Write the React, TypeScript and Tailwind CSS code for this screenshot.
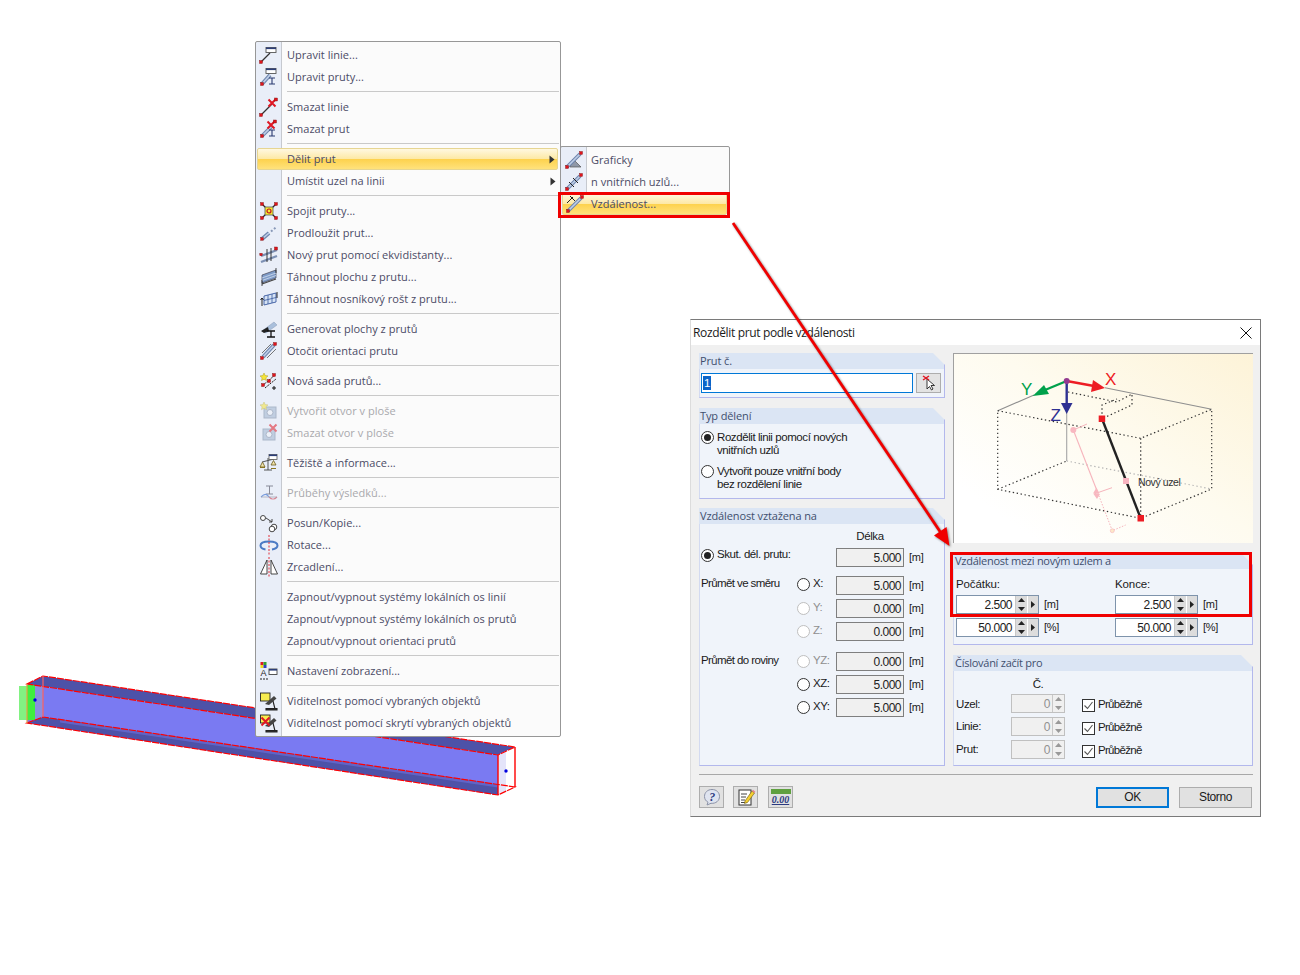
import React from "react";

const Node = ({ x, y, s = 3 }: { x: number; y: number; s?: number }) => (
  <rect x={x - s / 2} y={y - s / 2} width={s} height={s} fill="#e0141c" stroke="#7a1010" strokeWidth="0.4" />
);
const Win = ({ x = 7, y = 2.5 }: { x?: number; y?: number }) => (
  <g>
    <rect x={x} y={y} width="10" height="5" fill="#fff" stroke="#555" strokeWidth="0.9" />
    <rect x={x} y={y} width="10" height="1.6" fill="#2c3e78" />
  </g>
);
const Bar = ({ x1, y1, x2, y2 }: { x1: number; y1: number; x2: number; y2: number }) => (
  <g>
    <line x1={x1} y1={y1} x2={x2} y2={y2} stroke="#6f86ad" strokeWidth="3.8" />
    <line x1={x1} y1={y1} x2={x2} y2={y2} stroke="#bfcfe8" strokeWidth="1.6" />
  </g>
);
const IGlyph = ({ x, y, c = "#2a3a70" }: { x: number; y: number; c?: string }) => (
  <path d={`M${x - 3} ${y}h6M${x} ${y}v6M${x - 3} ${y + 6}h6`} stroke={c} strokeWidth="1.1" fill="none" />
);
const RedX = ({ x, y, s = 3.5 }: { x: number; y: number; s?: number }) => (
  <path d={`M${x - s} ${y - s}L${x + s} ${y + s}M${x + s} ${y - s}L${x - s} ${y + s}`} stroke="#e01824" strokeWidth="2" />
);
const Star = ({ x, y }: { x: number; y: number }) => (
  <path
    d={`M${x} ${y - 4}l1.2 2.6 2.8.3-2.1 1.9.6 2.8-2.5-1.4-2.5 1.4.6-2.8-2.1-1.9 2.8-.3z`}
    fill="#f6e43a"
    stroke="#a89a20"
    strokeWidth="0.5"
  />
);
const Ic = ({ children }: { children: React.ReactNode }) => (
  <svg width="20" height="20" viewBox="0 0 20 20" fill="none">
    {children}
  </svg>
);

const icons: Record<string, React.ReactNode> = {
  editLine: (
    <Ic>
      <line x1="2" y1="17" x2="11" y2="8" stroke="#333" strokeWidth="1.2" />
      <Win />
      <Node x={2} y={17} />
    </Ic>
  ),
  editBar: (
    <Ic>
      <Bar x1={3} y1={17} x2={11} y2={8} />
      <Win x={7} y={1.5} />
      <IGlyph x={13} y={11} />
      <Node x={3} y={17} />
    </Ic>
  ),
  delLine: (
    <Ic>
      <line x1="2" y1="18" x2="13" y2="7" stroke="#333" strokeWidth="1.2" />
      <RedX x={13} y={6} />
      <Node x={2} y={18} />
      <Node x={17} y={2.5} />
    </Ic>
  ),
  delBar: (
    <Ic>
      <Bar x1={3} y1={17} x2={13} y2={7} />
      <IGlyph x={13} y={11} />
      <RedX x={12} y={6} />
      <Node x={3} y={17} />
      <Node x={16} y={2.5} />
    </Ic>
  ),
  join: (
    <Ic>
      <path d="M3 3L17 17M17 3L3 17" stroke="#222" strokeWidth="1.2" />
      <rect x="6" y="6" width="8" height="8" fill="#f6ea30" stroke="#555" strokeWidth="0.8" />
      <circle cx="10" cy="10" r="2" fill="none" stroke="#c01020" strokeWidth="1.2" />
      <Node x={3} y={3} />
      <Node x={17} y={3} />
      <Node x={3} y={17} />
      <Node x={17} y={17} />
    </Ic>
  ),
  extend: (
    <Ic>
      <Bar x1={3} y1={16} x2={10} y2={10} />
      <path d="M12 8.5l1.5-1.3M15 6l1.5-1.3" stroke="#8899b8" strokeWidth="2" />
      <Node x={3} y={16} s={2.6} />
    </Ic>
  ),
  equi: (
    <Ic>
      <path d="M2 11L18 5M2 17L18 11" stroke="#7c90b4" strokeWidth="2.4" />
      <path d="M8 4v7M12 3v7M8 11v6M12 10v6" stroke="#222" strokeWidth="0.9" />
      <Node x={17} y={3.5} />
      <Node x={2} y={9.5} s={2.4} />
    </Ic>
  ),
  surf: (
    <Ic>
      <path d="M3 8L17 3V11L3 16Z" fill="#7f9cc8" stroke="#445" strokeWidth="0.7" />
      <path d="M3 11L17 6M3 13.5L17 8.5" stroke="#d0ddf0" strokeWidth="0.8" />
      <path d="M3 17L17 12" stroke="#444" strokeWidth="1.2" />
      <path d="M17 1v5M3 13v6" stroke="#222" strokeWidth="0.8" />
    </Ic>
  ),
  grid: (
    <Ic>
      <path d="M5 7L17 4V13L5 16Z" fill="#d6e3f5" stroke="#3a5aa0" strokeWidth="0.9" />
      <path d="M9 6V15M13 5V14M5 11.5L17 8.5" stroke="#3a5aa0" strokeWidth="0.8" />
      <path d="M3 9v8M1.5 11L3 9l1.5 2" stroke="#111" strokeWidth="0.9" />
      <path d="M18 3V9" stroke="#111" strokeWidth="0.9" />
    </Ic>
  ),
  gen: (
    <Ic>
      <path d="M3 12L15 3L18 6L7 14Z" fill="#a9bfdc" stroke="#8a9cb8" strokeWidth="0.5" />
      <path d="M2 12L9 8L10 12L5 14Z" fill="#222" />
      <path d="M8 12h8M12 12v6M8 18h8" stroke="#111" strokeWidth="1.3" />
    </Ic>
  ),
  rotate: (
    <Ic>
      <Bar x1={4} y1={16} x2={15} y2={4} />
      <path d="M3 12L12 3M8 17L17 8" stroke="#555" strokeWidth="0.8" />
      <Node x={3} y={17} />
      <Node x={16} y={3} />
    </Ic>
  ),
  newset: (
    <Ic>
      <path d="M3 15L16 4" stroke="#222" strokeWidth="1" strokeDasharray="2 1" />
      <path d="M6 17L17 8" stroke="#222" strokeWidth="1" strokeDasharray="2 1" />
      <Star x={5} y={6} />
      <Node x={4} y={14} />
      <Node x={15} y={4} />
      <Node x={10} y={10} />
      <path d="M15 15v4M13 17h4" stroke="#111" strokeWidth="1" />
    </Ic>
  ),
  openNew: (
    <Ic>
      <g opacity="0.55">
        <rect x="5" y="6" width="12" height="11" fill="#9fb4cf" stroke="#7b8ba3" />
        <circle cx="11" cy="11.5" r="3" fill="#eef2f8" stroke="#7b8ba3" />
        <Star x={5} y={5} />
      </g>
    </Ic>
  ),
  openDel: (
    <Ic>
      <g opacity="0.55">
        <rect x="4" y="6" width="12" height="11" fill="#9fb4cf" stroke="#7b8ba3" />
        <circle cx="10" cy="11.5" r="3" fill="#eef2f8" stroke="#7b8ba3" />
        <RedX x={14} y={5} />
      </g>
    </Ic>
  ),
  scales: (
    <Ic>
      <path d="M9 5V17M5 17H13M3 9L15 6" stroke="#444" strokeWidth="0.9" />
      <path d="M1 14L3.5 9L6 14Z" fill="#f1e3a8" stroke="#6b5a20" strokeWidth="0.8" />
      <path d="M12 12L14.5 7.5L17 12Z" fill="#f1e3a8" stroke="#6b5a20" strokeWidth="0.8" />
      <rect x="1" y="14" width="5" height="1" fill="#8a7420" />
      <rect x="12" y="15" width="5" height="1" fill="#8a7420" />
      <rect x="10" y="1.5" width="8" height="5" fill="#fff" stroke="#555" strokeWidth="0.8" />
      <rect x="10" y="1.5" width="8" height="1.6" fill="#2c3e78" />
    </Ic>
  ),
  result: (
    <Ic>
      <g opacity="0.65">
        <path d="M7 3h7M10.5 3v8M7 11h7" stroke="#556" strokeWidth="1" />
        <path d="M2 14C6 10 8 11 10 14" stroke="#3b6fd0" strokeWidth="1.1" />
        <path d="M10 14C13 17 15 17 18 14" stroke="#d04a5a" strokeWidth="1.1" />
        <path d="M2 14H18" stroke="#778" strokeWidth="0.7" />
      </g>
    </Ic>
  ),
  move: (
    <Ic>
      <circle cx="4" cy="5" r="2.5" stroke="#333" strokeWidth="0.9" fill="#fff" />
      <circle cx="15" cy="14" r="2.8" stroke="#333" strokeWidth="0.9" fill="#fff" />
      <circle cx="13" cy="16" r="2.8" stroke="#333" strokeWidth="0.9" fill="#fff" />
      <path d="M7 5L13 9M13 6V9H10" stroke="#333" strokeWidth="0.9" />
    </Ic>
  ),
  rot: (
    <Ic>
      <path d="M6.5 14.5C3 14 1.5 12.5 1.5 10.5C1.5 8 5 6.5 10 6.5C15 6.5 18.5 8 18.5 10.5C18.5 12.5 16 14 13 14.5" stroke="#4a7ac4" strokeWidth="2" />
      <path d="M10 0V20" stroke="#e01824" strokeWidth="0.9" strokeDasharray="2 1.5" />
    </Ic>
  ),
  mirror: (
    <Ic>
      <path d="M1.5 17L8 3V17ZM18.5 17L12 3V17Z" stroke="#333" strokeWidth="0.9" fill="#fff" />
      <path d="M10 0V20" stroke="#e01824" strokeWidth="0.9" strokeDasharray="2 1.5" />
    </Ic>
  ),
  display: (
    <Ic>
      <rect x="1.5" y="1" width="3" height="3" fill="#e01824" />
      <rect x="4.5" y="1" width="3" height="3" fill="#30a030" />
      <rect x="1.5" y="4" width="3" height="3" fill="#f0dc20" />
      <rect x="4.5" y="4" width="3" height="3" fill="#3040c0" />
      <text x="1.5" y="15" fontSize="9" fill="#222" fontFamily="Liberation Sans, sans-serif">A</text>
      <path d="M1 18h2M4 18h2M7 18h2" stroke="#222" strokeWidth="1.2" />
      <rect x="10" y="8" width="8" height="5.5" fill="#fff" stroke="#444" strokeWidth="0.9" />
      <rect x="10" y="8" width="8" height="1.6" fill="#2c3e78" />
    </Ic>
  ),
  vis: (
    <Ic>
      <rect x="1.5" y="2" width="9.5" height="8" fill="#f6ec50" stroke="#222" strokeWidth="0.9" />
      <path d="M6 13L15 5L17.5 7.5L10 14Z" fill="#444" />
      <path d="M7 17.5h11v1.5h-11zM14 10l2 8" stroke="#222" strokeWidth="1.1" fill="#333" />
    </Ic>
  ),
  visX: (
    <Ic>
      <rect x="1.5" y="2" width="9.5" height="8" fill="#f6ec50" stroke="#222" strokeWidth="0.9" />
      <path d="M6 13L15 5L17.5 7.5L10 14Z" fill="#444" />
      <path d="M7 17.5h11v1.5h-11zM14 10l2 8" stroke="#222" strokeWidth="1.1" fill="#333" />
      <RedX x={6.5} y={8.5} s={4} />
    </Ic>
  ),
  subGraph: (
    <Ic>
      <path d="M9 9L17 17H6Z" fill="#8f98a8" stroke="#555" strokeWidth="0.7" />
      <Bar x1={3} y1={17} x2={16} y2={4} />
      <Node x={3} y={17} />
      <Node x={17} y={3} />
    </Ic>
  ),
  subN: (
    <Ic>
      <Bar x1={3} y1={17} x2={16} y2={4} />
      <path d="M5 10L10 15M9 6L14 11" stroke="#222" strokeWidth="1" />
      <Node x={3} y={17} />
      <Node x={17} y={3} />
    </Ic>
  ),
  subDist: (
    <Ic>
      <Bar x1={3} y1={17} x2={16} y2={4} />
      <path d="M2 9L8 3M5 2L10 7" stroke="#222" strokeWidth="1" />
      <Node x={3} y={17} />
      <Node x={17} y={3} />
    </Ic>
  ),
};

type Item = { t: string; i?: string; off?: boolean; sub?: boolean; hi?: boolean } | "sep";
const items: Item[] = [
  { t: "Upravit linie...", i: "editLine" },
  { t: "Upravit pruty...", i: "editBar" },
  "sep",
  { t: "Smazat linie", i: "delLine" },
  { t: "Smazat prut", i: "delBar" },
  "sep",
  { t: "Dělit prut", sub: true, hi: true },
  { t: "Umístit uzel na linii", sub: true },
  "sep",
  { t: "Spojit pruty...", i: "join" },
  { t: "Prodloužit prut...", i: "extend" },
  { t: "Nový prut pomocí ekvidistanty...", i: "equi" },
  { t: "Táhnout plochu z prutu...", i: "surf" },
  { t: "Táhnout nosníkový rošt z prutu...", i: "grid" },
  "sep",
  { t: "Generovat plochy z prutů", i: "gen" },
  { t: "Otočit orientaci prutu", i: "rotate" },
  "sep",
  { t: "Nová sada prutů...", i: "newset" },
  "sep",
  { t: "Vytvořit otvor v ploše", i: "openNew", off: true },
  { t: "Smazat otvor v ploše", i: "openDel", off: true },
  "sep",
  { t: "Těžiště a informace...", i: "scales" },
  "sep",
  { t: "Průběhy výsledků...", i: "result", off: true },
  "sep",
  { t: "Posun/Kopie...", i: "move" },
  { t: "Rotace...", i: "rot" },
  { t: "Zrcadlení...", i: "mirror" },
  "sep",
  { t: "Zapnout/vypnout systémy lokálních os linií" },
  { t: "Zapnout/vypnout systémy lokálních os prutů" },
  { t: "Zapnout/vypnout orientaci prutů" },
  "sep",
  { t: "Nastavení zobrazení...", i: "display" },
  "sep",
  { t: "Viditelnost pomocí vybraných objektů", i: "vis" },
  { t: "Viditelnost pomocí skrytí vybraných objektů", i: "visX" },
];

const hiBg =
  "border border-[#e6d592] rounded-[2px] bg-[linear-gradient(to_bottom,#fff8e0_0%,#fde9a6_48%,#fdd24e_52%,#ffe27c_100%)]";
const menuFont = "font-['Open_Sans',sans-serif] text-[11px] tracking-[0.03px]";
const stripBg =
  "bg-[linear-gradient(to_right,#e9eef8_25px,#c6c9cf_25px,#c6c9cf_26px,#fbfbfb_26px)]";

const Tri = () => (
  <svg width="6" height="9" viewBox="0 0 6 9" className="ml-auto mr-[2px]">
    <path d="M0.5 0.5L5.5 4.5L0.5 8.5Z" fill="#333" />
  </svg>
);

function MenuRow({ it }: { it: Exclude<Item, "sep"> }) {
  return (
    <div className={`ml-px mr-[2px] flex h-[22px] items-center ${it.hi ? hiBg : ""}`}>
      <span className={`flex shrink-0 items-center justify-center ${it.hi ? "w-[23px]" : "w-[24px]"}`}>
        {it.i ? icons[it.i] : null}
      </span>
      <span className={`ml-[6px] whitespace-nowrap ${it.off ? "text-[#a9a9ad]" : "text-[#4b4b66]"}`}>{it.t}</span>
      {it.sub ? <Tri /> : null}
    </div>
  );
}

function ContextMenu() {
  return (
    <div className={`absolute left-[255px] top-[41px] w-[306px] rounded-[2px] border border-[#979797] py-[2px] ${stripBg} ${menuFont}`}>
      {items.map((it, k) =>
        it === "sep" ? (
          <div key={k} className="h-2 pl-[31px] pr-px pt-[3px]">
            <div className="h-px w-full bg-[#c9c9c9]" />
          </div>
        ) : (
          <MenuRow key={k} it={it} />
        ),
      )}
    </div>
  );
}

function SubMenu() {
  const rows = [
    { t: "Graficky", i: "subGraph" },
    { t: "n vnitřních uzlů...", i: "subN" },
    { t: "Vzdálenost...", i: "subDist", hi: true },
  ];
  return (
    <div className={`absolute left-[560px] top-[146px] w-[170px] rounded-[2px] border border-[#979797] py-[2px] ${stripBg} ${menuFont}`}>
      {rows.map((r) => (
        <div key={r.t} className={`ml-px mr-[2px] flex h-[22px] items-center ${r.hi ? hiBg : ""}`}>
          <span className={`flex shrink-0 items-center justify-center ${r.hi ? "w-[23px]" : "w-[24px]"}`}>{icons[r.i]}</span>
          <span className="ml-[5px] whitespace-nowrap text-[#4b4b66]">{r.t}</span>
        </div>
      ))}
    </div>
  );
}

function Beam() {
  return (
    <svg className="absolute left-[15px] top-[670px]" width="505" height="130" viewBox="15 670 505 130">
      <rect x="19" y="686" width="8" height="34" fill="#82f282" />
      <polygon points="27,684 498,755 498,795 27,723" fill="#7a7af2" />
      <rect x="27" y="685" width="8" height="35" fill="#3fee3f" />
      <polygon points="35,684 43,680 43,717 35,720" fill="#8a8ee0" />
      <polygon points="27,684 43,676 515,747 498,755" fill="#4d52a8" />
      <polygon points="27,723 43,717 515,787 498,795" fill="#4d52a8" />
      <polygon points="60,719.5 498,784.5 498,787.5 60,722.5" fill="#6064c8" />
      <polygon points="498,755 515,747 515,787 498,795" fill="#ffffff" />
      <polygon points="498,755 506,751 506,791 498,795" fill="#e4e4fa" />
      <g stroke="#ff0000" fill="none" strokeWidth="1.2">
        <path d="M27 684L43 676L515 747L498 755Z" strokeDasharray="7 1" />
        <path d="M27 723L43 717L515 787L498 795Z" strokeDasharray="7 1" />
        <path d="M498 755V795M515 747V787" strokeWidth="1.4" />
        <path d="M43 676V717" stroke="#ff6060" />
      </g>
      <line x1="27" y1="684" x2="27" y2="723" stroke="#e8a040" strokeWidth="1.2" />
      <circle cx="35" cy="700" r="1.7" fill="#0000e0" />
      <circle cx="506" cy="771" r="1.7" fill="#0000e0" />
    </svg>
  );
}

function Group({ title, className, right, children }: { title: string; className?: string; right?: boolean; children: React.ReactNode }) {
  return (
    <div className={`flex flex-col ${className ?? ""}`}>
      <div
        className={`flex h-4 shrink-0 items-center border-r border-r-[#b3b8ec] bg-[#dbe5f4] font-['Open_Sans',sans-serif] text-[11px] text-[#3f4f6e] [clip-path:polygon(0_0,calc(100%-12px)_0,100%_12px,100%_100%,0_100%)] ${
          right ? "pl-[2px] tracking-[-0.26px]" : "pl-px tracking-[-0.12px]"
        }`}
      >
        {title}
      </div>
      <div className="relative flex-1 border border-t-0 border-[#d3daf0] border-r-[#b3b8ec] border-b-[#b3b8ec] bg-[#f0f4fa]">{children}</div>
    </div>
  );
}

const Radio = ({ on, off }: { on?: boolean; off?: boolean }) => (
  <span
    className={`flex h-[13px] w-[13px] shrink-0 items-center justify-center rounded-full border bg-white ${
      off ? "border-[#bfbfbf]" : "border-[#333]"
    }`}
  >
    {on ? <span className="h-[7px] w-[7px] rounded-full bg-[#222]" /> : null}
  </span>
);

const Val = ({ v }: { v: string }) => (
  <span className="flex h-[19px] w-[68px] shrink-0 items-center justify-end border border-[#7f7f7f] bg-[#f0f0f0] pr-[2px] text-[12px] tracking-[-0.5px] text-[#222]">
    {v}
  </span>
);

function DistRow({
  label,
  mt,
  radio,
  off,
  v,
  wide,
  up = "mb-[1px]",
}: {
  label?: string;
  mt: string;
  radio?: string;
  off?: boolean;
  v: string;
  wide?: boolean;
  up?: string;
}) {
  return (
    <div className={`flex h-[19px] items-center ${mt}`}>
      {wide ? (
        <>
          <span className={`ml-[1px] ${up}`}><Radio on /></span>
          <span className={`ml-[3px] w-[119px] whitespace-nowrap ${up}`}>{label}</span>
        </>
      ) : (
        <>
          <span className={`ml-px w-[96px] whitespace-nowrap tracking-[-0.6px] ${up}`}>{label}</span>
          <span className={up}><Radio off={off} /></span>
          <span className={`ml-[3px] w-[23px] whitespace-nowrap ${up} ${off ? "text-[#8f8f8f]" : ""}`}>{radio}</span>
        </>
      )}
      <Val v={v} />
      <span className="ml-[5px] text-[11px] tracking-[-0.25px]">[m]</span>
    </div>
  );
}

const Updown = ({ dim }: { dim?: boolean }) => (
  <span className={`flex h-full w-[12px] shrink-0 flex-col items-center justify-around border-l border-[#c8c8c8] ${dim ? "bg-[#f0f0f0]" : "bg-[#dcdcdc]"}`}>
    <svg width="7" height="4" viewBox="0 0 7 4"><path d="M3.5 0L7 4H0Z" fill={dim ? "#999" : "#222"} /></svg>
    <svg width="7" height="4" viewBox="0 0 7 4"><path d="M0 0H7L3.5 4Z" fill={dim ? "#999" : "#222"} /></svg>
  </span>
);

function Spin({ v, unit }: { v: string; unit: string }) {
  return (
    <div className="flex h-[19px] items-center">
      <span className="flex h-[19px] w-[83px] items-center border border-[#7e93ab] bg-white">
        <span className="flex-1 pr-[3px] text-right text-[12px] tracking-[-0.5px]">{v}</span>
        <Updown />
        <span className="ml-px flex h-full w-[10px] shrink-0 items-center justify-center bg-[#dcdcdc]">
          <svg width="4" height="7" viewBox="0 0 4 7"><path d="M0 0L4 3.5L0 7Z" fill="#222" /></svg>
        </span>
      </span>
      <span className="ml-[5px] text-[11px] tracking-[-0.25px]">{unit}</span>
    </div>
  );
}

function NumRow({ label, mt, first }: { label: string; mt: string; first?: boolean }) {
  return (
    <div className={`flex h-[19px] items-center ${mt}`}>
      <span className={`ml-[2px] w-[55px] ${first ? "mt-[2px]" : ""}`}>{label}</span>
      <span className="flex h-[19px] w-[54px] items-center border border-[#c0c0c0] bg-[#f0f0f0]">
        <span className="flex-1 pr-[2px] text-right text-[12px] text-[#909090]">0</span>
        <Updown dim />
      </span>
      <span className="ml-[17px] mt-[3px] flex h-[13px] w-[13px] items-center justify-center border border-[#333] bg-white">
        <svg width="11" height="11" viewBox="0 0 11 11"><path d="M1.5 5.5L4.5 8.5L9.5 2" stroke="#555" strokeWidth="1.1" fill="none" /></svg>
      </span>
      <span className="ml-[3px] mt-[3px] tracking-[-0.7px]">Průběžně</span>
    </div>
  );
}

function Illustration() {
  return (
    <div className="h-[190px] border-l border-t border-[#a0a0a0] bg-[linear-gradient(35deg,#ffffff_15%,#fefbef_55%,#fdf3d8_100%)]">
      <svg width="299" height="189" viewBox="954 354 299 189">
        <g stroke="#8f8f8f" strokeWidth="1.1">
          <path d="M997.7 410.7L1034 395M1105 387.7L1211.7 409.3" />
          <path d="M1066.7 412V461" stroke="#a5a5a5" />
        </g>
        <g stroke="#333" strokeWidth="1.2" strokeDasharray="1.4 2.6" fill="none">
          <path d="M997.7 410.7L1140.7 438.3L1211.7 409.3V489L1140.7 518.3L997.7 489.3Z" />
          <path d="M1140.7 438.3V518.3M997.7 489.3L1066.7 461" />
          <path d="M1068 392L1117 402L1132 394V405L1102 418.7V405L1117 399" />
        </g>
        <path d="M1066.7 461L1211.7 489" stroke="#b5b5b5" strokeDasharray="1.4 2.6" strokeWidth="1.2" />
        <path d="M1073.3 430L1096.7 490" stroke="#f6b4bc" strokeWidth="1.1" />
        <path d="M1096.7 490L1112.3 530.7L1125.7 525" stroke="#f6b4bc" strokeWidth="1" strokeDasharray="1.5 1.5" fill="none" />
        <path d="M1073.3 430L1087 424M1094 494L1112 487.7" stroke="#f6b4bc" strokeWidth="1" />
        <circle cx="1073.3" cy="430" r="3" fill="#f8b8c0" />
        <path d="M1096.5 487.5l-3.5 6h6.5zM1097 499l-3.5-5h6.5z" fill="#f8b8c0" />
        <circle cx="1112.3" cy="530.7" r="2" fill="#fde8c8" stroke="#f6b4bc" strokeWidth="0.6" />
        <path d="M1102 418.7L1140.7 518.3" stroke="#222" strokeWidth="2.4" />
        <rect x="1098.7" y="415.5" width="6.5" height="6.5" fill="#ed1c24" />
        <rect x="1137.5" y="515" width="6.5" height="6.5" fill="#ed1c24" />
        <rect x="1123" y="478" width="6" height="6" fill="#f8b4c0" />
        <path d="M1066.7 381L1094 386" stroke="#ed1c24" strokeWidth="2.4" />
        <path d="M1105 388L1091 392L1093 380Z" fill="#ed1c24" />
        <path d="M1066.7 381L1045 390" stroke="#00a14b" strokeWidth="2.4" />
        <path d="M1032.7 396L1044 385L1049 394Z" fill="#00a14b" />
        <path d="M1066.7 381V404" stroke="#2e3192" strokeWidth="2.4" />
        <path d="M1066.7 414L1061 403H1072.5Z" fill="#2e3192" />
        <circle cx="1066.7" cy="381" r="3" fill="#93398f" />
        <g fontFamily="Liberation Sans, sans-serif" fontSize="17">
          <text x="1105" y="385" fill="#ed1c24">X</text>
          <text x="1021" y="395" fill="#00a14b">Y</text>
          <text x="1050.5" y="421" fill="#2e3192">Z</text>
        </g>
        <text x="1138" y="486" fontFamily="Liberation Sans, sans-serif" fontSize="10.5" fill="#333">Nový uzel</text>
      </svg>
    </div>
  );
}

function Dialog() {
  return (
    <div className="absolute left-[690px] top-[319px] h-[498px] w-[571px] border border-[#7a7a7a] border-l-[#dcdcdc] bg-[#f0f0f0] font-['Liberation_Sans',sans-serif] text-[11.5px] tracking-[-0.42px] text-[#1a1a1a]">
      <div className="flex h-[25px] items-center justify-between bg-white pl-[2px] pr-[8px] font-['Open_Sans',sans-serif] text-[12px] tracking-[-0.35px]">
        <span>Rozdělit prut podle vzdálenosti</span>
        <svg width="12" height="12" viewBox="0 0 12 12"><path d="M0.5 0.5L11.5 11.5M11.5 0.5L0.5 11.5" stroke="#111" strokeWidth="1" /></svg>
      </div>
      <div className="flex gap-[8px] pl-[8px] pt-[8px]">
        <div className="flex w-[246px] flex-col">
          <Group title="Prut č." className="h-[45px]">
            <div className="flex items-start pl-[1px] pt-[4px]">
              <span className="flex h-[20px] w-[212px] items-center border border-[#0078d7] bg-white pl-px">
                <span className="bg-[#0a64c8] px-[1px] leading-[14px] text-white">1</span>
              </span>
              <span className="ml-[3px] flex h-[20px] w-[25px] items-center justify-center border border-[#adadad] bg-[#e3e3e3]">
                <svg width="16" height="16" viewBox="0 0 16 16">
                  <path d="M6 4L6 14L8.5 11.5L10.5 15L12 14L10 10.5L13.5 10.5Z" fill="#fff" stroke="#222" strokeWidth="0.9" />
                  <path d="M2 1L8 5M8 1L2 5" stroke="#e01824" strokeWidth="1.5" />
                </svg>
              </span>
            </div>
          </Group>
          <Group title="Typ dělení" className="mt-[10px] h-[91px]">
            <div className="flex flex-col pl-[1px] pt-[7px]">
              <div className="flex items-start">
                <Radio on />
                <span className="ml-[3px] leading-[13px]">Rozdělit linii pomocí nových<br />vnitřních uzlů</span>
              </div>
              <div className="mt-[8px] flex items-start">
                <Radio />
                <span className="ml-[3px] leading-[13px]">Vytvořit pouze vnitřní body<br />bez rozdělení linie</span>
              </div>
            </div>
          </Group>
          <Group title="Vzdálenost vztažena na" className="mt-[9px] h-[258px]">
            <div className="flex flex-col">
              <div className="ml-[136px] mt-[5px] h-[14px] w-[68px] text-center leading-[14px]">Délka</div>
              <DistRow wide label="Skut. dél. prutu:" v="5.000" mt="mt-[5px]" up="mb-[5px]" />
              <DistRow label="Průmět ve směru" radio="X:" v="5.000" mt="mt-[9px]" up="mb-[3px]" />
              <DistRow radio="Y:" off v="0.000" mt="mt-[4px]" />
              <DistRow radio="Z:" off v="0.000" mt="mt-[4px]" />
              <DistRow label="Průmět do roviny" radio="YZ:" off v="0.000" mt="mt-[11px]" />
              <DistRow radio="XZ:" v="5.000" mt="mt-[4px]" />
              <DistRow radio="XY:" v="5.000" mt="mt-[4px]" />
            </div>
          </Group>
        </div>
        <div className="flex w-[300px] flex-col">
          <Illustration />
          <Group right title="Vzdálenost mezi novým uzlem a" className="mt-[10px] h-[92px]">
            <div className="grid grid-cols-[159px_1fr] pl-[2px] tracking-[-0.1px]">
              <span className="mt-[8px] h-[14px] leading-[14px]">Počátku:</span>
              <span className="mt-[8px] h-[14px] leading-[14px]">Konce:</span>
              <div className="mt-[4px]"><Spin v="2.500" unit="[m]" /></div>
              <div className="mt-[4px]"><Spin v="2.500" unit="[m]" /></div>
              <div className="mt-[4px]"><Spin v="50.000" unit="[%]" /></div>
              <div className="mt-[4px]"><Spin v="50.000" unit="[%]" /></div>
            </div>
          </Group>
          <Group right title="Číslování začít pro" className="mt-[10px] h-[111px]">
            <div className="flex flex-col">
              <div className="ml-[57px] mt-[6px] h-[14px] w-[54px] text-center leading-[14px]">Č.</div>
              <NumRow first label="Uzel:" mt="mt-[3px]" />
              <NumRow label="Linie:" mt="mt-[4px]" />
              <NumRow label="Prut:" mt="mt-[4px]" />
            </div>
          </Group>
        </div>
      </div>
      <div className="ml-[8px] mt-[8px] h-px w-[554px] bg-[#a8a8a8]" />
      <div className="ml-[8px] mt-[11px] flex h-[22px] w-[553px] items-center">
        <span className="flex h-[22px] w-[25px] items-center justify-center border border-[#adadad] bg-[#e1e1e1]">
          <svg width="20" height="20" viewBox="0 0 20 20">
            <path d="M10 2.5C5.5 2.5 2.5 5.5 2.5 9.5C2.5 12 3.8 14 6 15.2L5 18L9 16.3C14 16.8 17.5 13.5 17.5 9.5C17.5 5.5 14.5 2.5 10 2.5Z" fill="#dfe4f0" stroke="#8c93a8" />
            <text x="10" y="14" textAnchor="middle" fontSize="12" fontWeight="700" fontStyle="italic" fill="#2b3a80" fontFamily="Liberation Serif, serif">?</text>
          </svg>
        </span>
        <span className="ml-[9px] flex h-[22px] w-[25px] items-center justify-center border border-[#adadad] bg-[#e1e1e1]">
          <svg width="20" height="20" viewBox="0 0 20 20">
            <rect x="3" y="3" width="12" height="15" fill="#fff" stroke="#333" />
            <path d="M5 7h6M5 10h5M5 13h4M5 15.5h6" stroke="#444" />
            <path d="M9 14L16 4L18.5 6L11.5 15.5L8.5 16.5Z" fill="#f5cf30" stroke="#6b5a10" strokeWidth="0.6" />
            <path d="M16 4L17 2.8L19.3 4.7L18.5 6Z" fill="#e8808a" />
          </svg>
        </span>
        <span className="ml-[10px] flex h-[22px] w-[25px] flex-col items-center justify-center border border-[#adadad] bg-[#e1e1e1]">
          <span className="h-[5px] w-[20px] bg-[#5fa040]" />
          <span className="font-['Liberation_Serif',serif] text-[10px] font-bold italic leading-[11px] tracking-[0px] text-[#2b3a80] underline">0.00</span>
        </span>
        <span className="ml-auto flex h-[21px] w-[73px] items-center justify-center border-2 border-[#0078d7] bg-[#e1e1e1] text-[12px]">OK</span>
        <span className="ml-[10px] flex h-[21px] w-[73px] items-center justify-center border border-[#adadad] bg-[#e1e1e1] text-[12px]">Storno</span>
      </div>
    </div>
  );
}

function Arrow() {
  return (
    <svg className="absolute left-[725px] top-[215px] drop-shadow-[1px_1px_1px_rgba(0,0,0,0.45)]" width="235" height="340" viewBox="725 215 235 340">
      <line x1="733" y1="223" x2="941" y2="533" stroke="#f00000" strokeWidth="2.8" />
      <path d="M949.5 546L934 535.5L946.5 527Z" fill="#f00000" />
    </svg>
  );
}

export default function App() {
  return (
    <div className="relative h-[975px] w-[1300px] overflow-hidden bg-white">
      <Beam />
      <ContextMenu />
      <SubMenu />
      <Dialog />
      <Arrow />
      <div className="absolute left-[558px] top-[192px] h-[26px] w-[172px] border-[3px] border-[#f00000]" />
      <div className="absolute left-[950px] top-[552px] h-[65px] w-[302px] border-[3px] border-[#f00000]" />
    </div>
  );
}
